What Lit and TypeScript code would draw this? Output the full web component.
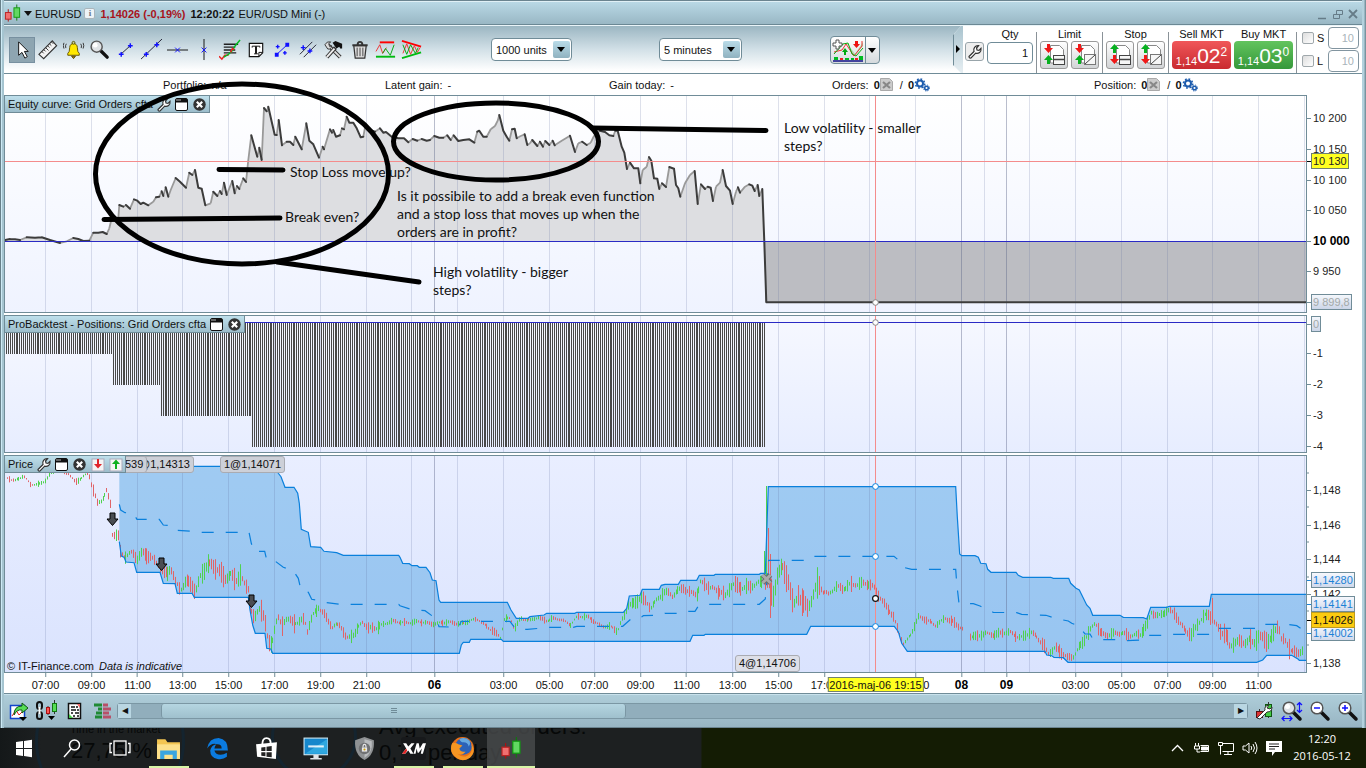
import { LitElement, html, svg, css } from "lit";
import { customElement, property } from "lit/decorators.js";
import { classMap } from "lit/directives/class-map.js";

type Pt = [number, number];

const LEFT = 5;
const SPAN = 1301;
const pct = (x: number) => `${((x - LEFT) / SPAN) * 100}%`;

/* Traces are digitised in thirds of a pixel, relative to a local origin. */
const trace = (x0: number, y0: number, s: string): Pt[] =>
  s.trim().split(/\s+/).map((p) => {
    const [x, y] = p.split(",").map(Number);
    return [x0 + x / 3, y0 + y / 3] as Pt;
  });
const path = (pts: Pt[]) => "M" + pts.map(([x, y]) => `${x.toFixed(1)} ${y.toFixed(1)}`).join("L");

const equity: Pt[] = [
  ...trace(0, 90, `15,450 30,447 45,448 60,450 80,442 105,443 125,442 150,450 170,456 180,459 200,454 220,444 235,447 250,453 268,452 280,428 295,428 308,426 320,432 328,415 335,385 345,390 355,385 358,345 370,350 378,345 390,356 402,328 412,332 422,342 430,338 445,346 460,335 468,322 478,320 485,304 490,318 497,292 505,320 512,300 527,264 540,275 558,293 568,248 577,255 585,240 595,293 605,296 616,346 632,340 640,305 652,318 660,303 665,312 672,278 680,315 690,290 697,273 704,310 711,288 718,297 730,265 738,276 745,210 754,136 762,165 772,200 778,173 785,210 792,54 800,64 805,50 815,95 824,134 830,135 836,90 846,166 860,155 870,155 880,165 886,140 905,178 919,100 928,152 940,163 957,203 968,170 972,178 990,118 996,128 1000,120 1008,140 1020,136 1026,115 1032,118 1040,80 1048,98 1060,98 1070,115 1082,142 1090,140 1096,108 1110,120 1125,125`),
  ...trace(380, 90, `0,115 10,128 18,126 35,140 55,145 72,145 85,157 98,147 112,152 125,147 140,152 150,150 163,138 178,143 190,143 202,136 212,150 221,136 235,153 250,150 268,148 283,158 292,125 298,122 310,140 320,140 332,118 345,108 353,92 358,75 370,122 380,140 388,152 396,118 404,116 410,145 422,138 434,133 442,165 450,160 457,150 472,168 480,155 489,170 496,153 508,165 518,152 524,166 545,152 570,137 585,186 595,160 607,155 620,165 632,158 642,138 660,122 675,126 688,136 700,138 706,122 713,122 725,170 733,188 741,237 750,218 762,235 775,235 781,280 788,240 800,230 807,201 814,212 822,265 832,266 838,297 846,280 858,291 868,231 882,236 888,285 895,295 901,320 915,280 930,255 944,243 953,342 963,283 975,297 983,290 992,293 999,333 1008,290 1020,278 1028,240 1038,288 1050,302 1058,342 1068,305 1074,292 1080,308 1095,290 1108,283 1117,287 1124,303 1133,285 1138,318 1147,297 1153,455 1159,637`),
  [1306, 302.3],
];

const upper: Pt[] = [
  ...trace(0, 450, `358,49 825,49 835,70 843,80 855,112 882,112 893,130 898,160 904,238 925,247 932,290 962,292 972,304 1010,308 1030,316 1196,316`),
  ...trace(400, 450, `0,322 8,340 28,341 36,347 52,347 58,352 78,352 90,368 97,390 108,392 117,450 122,457 322,457 333,480 349,505 384,505 390,500 432,495 440,490 524,490 530,487 670,487 680,475 688,438 720,436 727,418 778,418 784,406 795,403 835,403 842,391 890,391 898,376 942,376 946,373 1078,373 1082,370 1096,370 1105,110`),
  ...trace(740, 450, `647,110 652,200 659,312 665,317 705,317 715,322 722,340 738,341 743,358 753,367 828,367 835,376 848,382`),
  ...trace(1040, 450, `0,382 32,382 40,385 86,385 92,400 108,415 118,420 140,465 150,475 158,496 240,496 250,502 310,503 320,507 332,472 380,472 388,469 508,469 514,433 799,433`),
];
const lower: Pt[] = [
  ...trace(0, 450, `358,275 364,318 372,322 378,336 402,338 410,367 480,367 490,400 525,401 532,430 576,430 583,442 745,442 750,480 758,525 766,550 795,550 800,595 812,597 818,610`),
  ...trace(400, 450, `178,610 184,585 190,577 208,577 212,568 304,568 310,574 870,574 878,556 912,556 916,553 1220,553 1232,529`),
  ...trace(740, 450, `463,529 475,545 485,580 502,604 915,604 920,615 935,617 942,622`),
  ...trace(1040, 450, `40,622 70,623 84,637 650,637 668,630 680,616 755,616 775,628 778,631 799,631`),
];
const middle: Pt[] = [
  ...trace(0, 450, `358,163 362,180 375,188 400,190 411,208 478,208 490,225 520,228 532,241 590,245 602,247 747,247 754,280 762,304 794,304 800,330 825,333 850,352 880,362 895,385 903,420 925,427 935,448 965,452 980,458 1020,463 1196,463`),
  ...trace(400, 450, `0,467 30,477 75,482 100,500 110,505 117,530 175,532 184,514 330,514 345,535 355,538 382,538 420,535 450,532 520,532 530,529 668,529 680,518 695,505 720,505 730,497 780,496 795,490 830,490 845,484 885,484 895,468 925,463 1078,463 1096,447 1106,331 1218,331 1234,319`),
  ...trace(740, 450, `462,319 475,330 490,352 515,358 647,358 650,400 657,460 700,461 720,468 740,480 760,487 830,488 845,493`),
  ...trace(1040, 450, `18,496 50,506 85,513 95,520 115,527 135,552 150,552 158,566 170,569 240,569 250,572 310,570 325,556 380,556 400,553 508,553 530,535 660,535 672,523 740,523 770,527 782,535 799,535`),
];

const price: Pt[] = `7,478 15,480 23,476 30,485 38,484 45,480 52,472 60,468 68,473 75,482 82,478 88,473 92,487 97,502 102,498 106,492 110,505 112,535 118,537 120,552 125,555 132,552 137,560 142,554 150,556 157,562 162,572 167,575 170,568 175,582 180,588 186,580 192,587 195,594 200,578 207,562 212,564 218,570 224,582 230,574 235,580 240,572 245,588 248,590 251,612 254,622 260,605 264,615 268,643 271,643 275,625 279,620 281,630 285,618 290,620 298,622 304,620 307,632 312,617 318,606 324,614 332,628 340,625 346,638 355,632 362,623 368,629 380,625 392,622 405,622 430,623 447,623 460,623 470,621 478,620 485,625 492,630 500,638 504,620 510,618 514,628 520,618 530,621 538,617 545,620 552,619 560,620 570,624 577,616 588,618 600,625 610,627 617,632 625,612 628,602 634,604 640,598 645,603 650,607 657,598 663,592 672,597 678,590 683,586 690,593 697,595 700,584 706,585 712,587 720,592 725,598 732,584 740,586 750,588 760,583 764,577 770,585 772,600 777,575 782,572 788,580 793,606 798,590 803,605 807,610 812,600 818,582 823,590 828,594 835,588 842,590 848,584 855,583 862,585 868,585 875,588 880,597 888,610 893,618 898,632 903,643 908,638 913,628 918,618 928,621 935,624 945,619 955,624 961,627 970,636 976,638 985,633 995,634 1010,633 1020,637 1030,633 1037,638 1043,645 1048,652 1055,648 1062,655 1067,658 1073,655 1080,645 1088,635 1095,622 1100,632 1110,635 1120,634 1130,634 1140,635 1147,625 1151,612 1158,615 1166,611 1174,614 1180,624 1186,630 1191,635 1197,625 1204,617 1209,613 1213,620 1220,630 1225,635 1229,648 1235,642 1242,640 1249,640 1253,645 1258,638 1265,640 1272,635 1278,624 1281,640 1288,648 1297,653 1303,648`
  .split(" ").map((p) => p.split(",").map(Number) as Pt);

const priceAt = (x: number) => {
  for (let i = 1; i < price.length; i++) {
    if (x <= price[i][0]) {
      const [ax, ay] = price[i - 1];
      const [bx, by] = price[i];
      return ay + ((x - ax) / (bx - ax)) * (by - ay);
    }
  }
  return price[price.length - 1][1];
};
const halfRange = (x: number) =>
  x < 90 ? 2.5 : x < 200 ? 6 : x < 295 ? 8 : x < 380 ? 5 : x < 620 ? 3 : x < 765 ? 6 : x < 820 ? 12 : x < 880 ? 6 : x < 1035 ? 4 : x < 1210 ? 5 : x < 1290 ? 8 : 5;

const candlePaths = () => {
  let up = "M766.5 486V580M764.5 551V575";
  let down = "M768.5 528V575M770.5 554V618M1212.5 598V622";
  const center = (i: number, x: number) =>
    priceAt(x) + (Math.sin(i * 1.05) + Math.sin(i * 0.43)) * halfRange(x) * 0.25;
  for (let i = 0; i < 679; i++) {
    const x = Math.round(7 + i * 1.91);
    if ((x > 962 && x < 970) || x > 1304) continue;
    const noise = Math.abs(Math.sin(i * 12.9898) * 43758.5453) % 1;
    const h = halfRange(x) * (0.3 + noise * noise * 1.1);
    const c = center(i, x);
    const slope = center(i + 1, x + 2) - center(i - 1, x - 2);
    const seg = `M${x + 0.5} ${(c - h).toFixed(1)}V${(c + h).toFixed(1)}`;
    if (slope > 0) down += seg;
    else up += seg;
  }
  return { up, down };
};
const candles = candlePaths();

const barPath = () => {
  let d = "";
  for (let i = 0; ; i++) {
    const x = Math.round(6 + i * 1.91);
    if (x > 765) break;
    const y = x < 112 ? 354 : x < 161 ? 385 : x < 251 ? 416 : 447;
    d += `M${x + 0.5} 323V${y}`;
  }
  return d;
};
const bars = barPath();

const minorGrid = [45, 91, 137, 182, 228, 274, 320, 366, 411, 457, 503, 549, 594, 640, 686, 732, 778, 824, 869, 915, 984, 1029, 1075, 1121, 1167, 1212, 1258, 1304];
const dayGrid = [434, 961, 1006];
const grid = svg`
  <path d=${minorGrid.map((x) => `M${x + 0.5} 90V680`).join("")} stroke="#5a6a9a" stroke-opacity=".2"/>
  <path d=${dayGrid.map((x) => `M${x + 0.5} 90V680`).join("")} stroke="#5a6488" stroke-opacity=".42"/>`;
const crosshair = svg`<path d="M875.5 90V680" stroke="#f48c8c"/>`;

const times: [number, string, boolean?][] = [
  [45, "07:00"], [91, "09:00"], [137, "11:00"], [182, "13:00"], [228, "15:00"], [274, "17:00"], [320, "19:00"], [366, "21:00"],
  [434, "06", true], [503, "03:00"], [549, "05:00"], [594, "07:00"], [640, "09:00"], [686, "11:00"], [732, "13:00"], [778, "15:00"],
  [824, "17:00"], [915, "21:00"], [961, "08", true], [1006, "09", true], [1075, "03:00"], [1121, "05:00"], [1167, "07:00"], [1212, "09:00"], [1258, "11:00"],
];

const wrench = svg`<path d="M3 13.5 8 8.500C7 5.500 9 2.500 12.500 2.700L10.500 5 11 7 13 7.300 15 5.300C15.500 9 12.500 11 9.700 10.200L5 15Q3 15.500 3 13.500Z" fill="#fff" stroke="#333" stroke-width="1.200"/>`;
const headIcons: Record<string, unknown> = {
  wrench,
  window: svg`<rect x="2.500" y="2.500" width="12" height="12" rx="1.500" fill="#fff" stroke="#111"/><path d="M3 3h11v3.500H3z" fill="#111"/><path d="M3 3h5v2H3z" fill="#666"/>`,
  close: svg`<circle cx="8.500" cy="8.500" r="6.200" fill="#333"/><path d="m5.800 5.800 5.400 5.400m0-5.400-5.400 5.400" stroke="#fff" stroke-width="2.200"/>`,
  down: svg`<rect x="3" y="3" width="12" height="12" fill="#f4f4f4" stroke="#aab"/><path d="M8 3h2v5h3l-4 4.500L5 8h3z" fill="#e0252b"/>`,
  up: svg`<rect x="3" y="3" width="12" height="12" fill="#f4f4f4" stroke="#aab"/><path d="M8 13h2V8h3L9 3.500 5 8h3z" fill="#10b020"/>`,
};
const candlePair = svg`<path d="M4.500 5v13" stroke="#a11"/><rect x="1.500" y="8.500" width="6" height="7" fill="#f07070" stroke="#b22"/><path d="M13.500 0v17" stroke="#171"/><rect x="10.500" y="3.500" width="6" height="10" fill="#62d862" stroke="#191"/>`;

const glass = svg`<path d="m12 12 7 7" stroke="#111" stroke-width="3.500" stroke-linecap="round"/><circle cx="8" cy="8" r="5.800" fill="#dfe3e6" stroke="#555" stroke-width="1.500"/><circle cx="6.500" cy="6.500" r="2.500" fill="#fff"/>`;
const tools: [string, unknown][] = [
  ["Pointer", svg`<path d="M8 3v14l3.500-3 3 6 2.500-1.500-3-5.500H18z" fill="#fff" stroke="#111"/>`],
  ["Ruler", svg`<path d="m2 16 14-14 4.500 5L7 20.500z" fill="#f4f4f4" stroke="#333" stroke-width="1.200"/><path d="m5 13 2 2m0-4 2 2m0-4 3 3m-1-5 2 2m0-4 2 2m0-4 2 2" stroke="#333"/>`],
  ["Alert", svg`<path d="M5 15q2-1 2-6c0-3 2-4 4-4.500 2 .5 4 1.500 4 4.500q0 5 2 6v2H5z" fill="#ffe800" stroke="#665500"/><circle cx="11" cy="4" r="1.500" fill="#cc9" stroke="#550"/><path d="M9 18h4l-2 2.500z" fill="#b80" stroke="#540"/><path d="M3.500 5Q2 7 3 9.500M1 4q-1.500 3 0 6M18.500 5Q20 7 19 9.500M21 4q1.500 3 0 6" fill="none" stroke="#333"/>`],
  ["Zoom", glass],
  ["Segment", svg`<path d="m6 16 10-9" stroke="#223"/><path d="M4 16h5m-2.500-2.500v5M13.500 7h5M16 4.500v5" stroke="#11f" stroke-width="1.500"/>`],
  ["Line", svg`<path d="M0 21 22 0" stroke="#223"/><path d="M3 16h5m-2.500-2.500v5M14 6h5m-2.500-2.500v5" stroke="#11f" stroke-width="1.500"/>`],
  ["Horizontal line", svg`<path d="M0 11.500h22" stroke="#111"/><path d="m8.500 9 5 5m0-5-5 5" stroke="#11f"/>`],
  ["Vertical line", svg`<path d="M11.500 0v22" stroke="#111"/><path d="m9 9 5 5m0-5-5 5" stroke="#11f"/>`],
  ["Fibonacci", svg`<path d="M5 5.500h15M5 8.500h12M5 11.500h12M5 14.500h13" stroke="#222" stroke-width="1.500"/><path d="m0 18 3 3 3-4 4 0" fill="none" stroke="#e22" stroke-width="1.500"/><path d="m5 19 5-3 4-4 3-5 5-6" fill="none" stroke="#0b2" stroke-width="1.500"/><path d="m12 14 2-4 2 1" fill="none" stroke="#e22" stroke-width="1.500"/>`],
  ["Text", svg`<path d="M4.500 4.500h14v10l-4 4h-10z" fill="#fff" stroke="#111" stroke-width="1.200"/><path d="M14.500 18v-4H18" fill="none" stroke="#111"/><path d="M7.500 9V7.500h8V9M9.500 15.500h4" fill="none" stroke="#111"/><path d="M11.500 7.500v8" stroke="#111" stroke-width="2"/>`],
  ["Regression", svg`<path d="m5 17 12-11" stroke="#11f"/><path d="M4 14.500h4v4H4zM15 4h4v4h-4z" fill="#11f"/><path d="M7 6v4m-2-2h4M14.500 12.500v4m-2-2h4" stroke="#11f" stroke-width="1.500"/>`],
  ["Channel", svg`<path d="M3 16 16 3M7 19 20 6" stroke="#223"/><path d="M4 9h5M6.500 6.500v5M11 12.500h5M13.500 10v5" stroke="#11f" stroke-width="1.500"/>`],
  ["Drawing settings", svg`<path d="m5 6 13 13" stroke="#333" stroke-width="4"/><path d="m5 6 13 13" stroke="#ddd" stroke-width="2"/><path d="M2 6q2-4 6-3l-2 2 1 3 2-1q0 4-4 3.500z" fill="#ddd" stroke="#333"/><path d="m4 19 9-10" stroke="#333" stroke-width="4"/><path d="m4 19 8-9" stroke="#eee" stroke-width="2"/><path d="m10 4 3-2 7 3v5h-2l-1-2-3 2z" fill="#111"/>`],
  ["Delete", svg`<path d="M5 7h13l-1.500 13h-10z" fill="#ddd" stroke="#333" stroke-width="1.300"/><path d="M3.500 6.500h16M9 6q0-3 2.500-3T14 6" fill="none" stroke="#333" stroke-width="2"/><path d="M8.500 9v9m3-9v9m3-9v9" stroke="#444"/>`],
  ["Range pattern", svg`<path d="M5 3.500h15" stroke="#f00" stroke-width="2"/><path d="M1 18.500h20" stroke="#0b1" stroke-width="2"/><path d="m1 13 4-7 3 9 4-6" fill="none" stroke="#e33"/><path d="m8 15 3-5 5 7 4-11" fill="none" stroke="#0a1"/>`],
  ["Triangle pattern", svg`<path d="m1 2 20 6" stroke="#f00" stroke-width="2"/><path d="m1 20 20-6" stroke="#0b1" stroke-width="2"/><path d="m2 15 4-10 4 11 4-9 3 7 3-5" fill="none" stroke="#e33"/><path d="m2 6 4 10 4-10 5 9 3-6" fill="none" stroke="#0a1"/>`],
];

const orderIcon = (kind: string, first: string) => {
  const a = first === "sell" ? ["#f01818", "M8 1h-3v4H2l4.500 5L11 5H8z"] : ["#08b020", "M5 10h3V6h3L6.500 1 2 6h3z"];
  const b = first === "sell" ? ["#08b020", "M5 21h3v-4h3l-4.500-5L2 17h3z"] : ["#f01818", "M8 12h-3v4H2l4.500 5L11 16H8z"];
  return svg`<path d="M8.500 2.500h9l4 4V20h-13z" fill="#fff" stroke="#888"/>
    ${kind === "line"
      ? svg`<rect x="11.500" y="12.500" width="11" height="9" fill="#f6f6f6" stroke="#444"/><path d="M11 16.500h12" stroke="#444" stroke-width="1.500"/>`
      : svg`<rect x="11.500" y="11.500" width="11" height="10" fill="#f6f6f6" stroke="#777"/><path d="m12 21 10-9" stroke="#444"/>`}
    <path d=${a[1]} fill=${a[0]}/><path d=${b[1]} fill=${b[0]}/>`;
};

@customElement("chart-header")
export class ChartHeader extends LitElement {
  @property() label = "";
  @property({ type: Array }) icons: string[] = [];
  static styles = css`
    :host { display: flex; align-items: center; height: 17px; padding: 0 0 0 3px; color: #111; font-size: 11px; background: linear-gradient(#bfe0ec, #9cbdcb); border-right: 1px solid #708c98; border-bottom: 1px solid #708c98; }
    .name { margin-right: 2px; white-space: nowrap; }
    .btn { width: 18px; height: 17px; padding: 0; border: 0; background: none; }
    .btn svg { display: block; width: 17px; height: 17px; }
  `;
  render() {
    return html`<span class="name">${this.label}</span>${this.icons.map(
      (i) => html`<button class="btn" aria-label=${i}><svg viewBox="0 0 17 17" fill="none">${headIcons[i]}</svg></button>`
    )}`;
  }
}

@customElement("value-axis")
export class ValueAxis extends LitElement {
  @property({ type: Number }) top = 0;
  @property({ type: Array }) marks: [number, string, string?][] = [];
  @property({ type: Array }) minor: number[] = [];
  static styles = css`
    :host { display: block; position: relative; }
    .mark, .minor { position: absolute; left: 0; transform: translateY(-50%); display: flex; align-items: center; white-space: nowrap; }
    .mark::before, .minor::before { content: ""; width: 4px; height: 1px; background: #708c98; }
    .minor::before { width: 2px; }
    .text { height: 14px; padding: 0 1px; border: 1px solid transparent; font: 11px/14px "Liberation Sans", Arial, sans-serif; color: #222; }
    .bold .text { font-size: 12px; font-weight: bold; color: #000; }
    .yellow .text { background: #ffff20; border-color: #708070; color: #222; }
    .gold .text { background: #fccb10; border-color: #bc9a20; color: #111; }
    .muted .text { background: linear-gradient(#f4f7fc, #ccd5e8); border-color: #708c98; color: #a3a9a8; }
    .blue .text { background: linear-gradient(#f6f8fd, #d0d9ec); border-color: #708c98; color: #1c82d6; }
    .yellow::before, .gold::before { background: #000; }
    .blue::before { background: #1c82d6; }
  `;
  render() {
    return html`${this.minor.map((y) => html`<span class="minor" style="top:${y - this.top}px"></span>`)}
      ${this.marks.map(([y, t, k]) => html`<span class="mark ${k ?? ""}" style="top:${y - this.top}px"><span class="text">${t}</span></span>`)}`;
  }
}

@customElement("app-root")
export class AppRoot extends LitElement {
  static styles = css`
    :host { display: block; min-height: 100vh; background: #141b06; font: 11px/14px "Liberation Sans", Arial, sans-serif; color: #111; overflow: hidden; }
    * { box-sizing: border-box; }
    button, input, select { font: inherit; color: inherit; margin: 0; }
    svg { display: block; }
    .window { padding: 0 4px; background: linear-gradient(90deg, #68808a 0 1px, #cdeaf5 1px 2px, #a5c4d0 2px 4px, #a5c4d0 calc(100% - 4px), #c2dfeb calc(100% - 3px), #8aa8b4 calc(100% - 1px), #68808a 100%); }
    .title { display: flex; align-items: center; height: 25px; padding: 2px 3px 0 0; border-top: 1px solid #6b8490; border-bottom: 1px solid #6b8894; background: linear-gradient(#e0f0f6 0 1px, #b9d8e5 1px, #99b7c4); }
    .title .logo { width: 18px; height: 19px; }
    .title .caret { margin: 0 3px 0 2px; border: 4px solid transparent; border-top: 5px solid #111; border-bottom: 0; width: 7px; }
    .title .info { width: 11px; height: 11px; margin: 0 5px 0 3px; border: 1px solid #aab6bc; border-radius: 2px; background: #eef4f7; font: bold 9px/9px "Liberation Serif", serif; text-align: center; color: #678; }
    .title .loss { font-weight: bold; color: #a8141c; margin-right: 5px; }
    .title .clock { font-weight: bold; margin-right: 4px; }
    .title .win { display: flex; margin-left: auto; gap: 2px; }
    .title .win button { width: 13px; height: 14px; padding: 0; border: 0; background: none; }
    .toolbar { display: flex; align-items: center; height: 49px; border-top: 1px solid #e9f4f8; border-bottom: 1px solid #708c98; padding-left: 5px; background: linear-gradient(#9bb6c2, #d2e0e7 50%, #fff 95%); }
    .tools { display: flex; }
    .tool { width: 26px; height: 26px; padding: 2px; border: 0; background: none; }
    .tool.active { background: #8ea5b1; border: 1px solid #7890a0; padding: 1px; }
    .combo { position: relative; width: 81px; height: 23px; }
    .combo select { width: 100%; height: 100%; appearance: none; border: 1px solid #708c98; border-radius: 4px; background: #fff; padding: 0 0 0 4px; }
    .combo .drop { position: absolute; right: 2px; top: 3px; width: 17px; height: 17px; border-radius: 2px; background: linear-gradient(#b9dbe8, #90b2c0); pointer-events: none; }
    .combo .drop::after, .ind .arrow::after { content: ""; position: absolute; left: 4px; top: 6px; border: 4px solid transparent; border-top: 5px solid #000; border-bottom: 0; }
    .units { margin-left: 66px; }
    .minutes { margin-left: 87px; width: 83px; }
    .ind { display: flex; margin-left: 88px; height: 28px; border: 1px solid #708c98; border-radius: 4px; background: linear-gradient(#fff, #d5dadd); overflow: hidden; flex: none; }
    .ind button { padding: 0; border: 0; background: none; width: 34px; }
    .ind .arrow { position: relative; width: 14px; border-left: 1px solid #708c98; }
    .ind .arrow::after { left: 2px; top: 11px; }
    .trade { display: flex; align-items: stretch; margin-left: auto; height: 47px; padding: 0 3px 0 12px; gap: 3px; position: relative; background: #fff; clip-path: polygon(0 9px, 8px 0, 100% 0, 100% 100%, 8px 100%, 0 39px); }
    .trade::before { content: ""; position: absolute; left: 0; top: 0; width: 9px; height: 47px; background: linear-gradient(#a9c3ce, #e7eff3); border-left: 1px solid #708c98; }
    .trade::after { content: ""; position: absolute; left: 3px; top: 19px; border: 4px solid transparent; border-left-color: #000; border-right: 0; }
    .col { display: flex; flex-direction: column; align-items: center; }
    .col .cap { height: 14px; line-height: 14px; margin-top: 1px; }
    .pair { display: flex; gap: 3px; }
    .gear { align-self: flex-start; margin-top: 16px; width: 19px; height: 19px; padding: 0; border: 1px solid #98a4aa; border-radius: 3px; background: #eee; }
    .qty { width: 46px; height: 22px; border: 1px solid #708c98; border-radius: 4px; text-align: right; padding: 0 4px; margin-top: 1px; }
    .ord { width: 28px; height: 28px; padding: 1px; border: 1px solid #9a9a9a; border-radius: 3px; background: linear-gradient(#fff, #d2d4d6); }
    .sep { width: 1px; margin-top: 6px; background: #8a9298; }
    .mkt { width: 59px; height: 28px; border: 0; border-radius: 4px; padding: 0; color: #fff; display: flex; align-items: flex-end; justify-content: center; line-height: 16px; }
    .mkt .big { font-size: 21px; line-height: 27px; }
    .mkt .sup { font-size: 12px; line-height: 14px; align-self: flex-start; margin-top: 4px; }
    .sell { background: linear-gradient(#f0575a, #c92a30); }
    .buy { background: linear-gradient(#62c45e, #36983a); }
    .sl { display: grid; grid-template-columns: 12px 8px 31px; column-gap: 3px; align-items: center; padding-left: 2px; }
    .sl input[type="checkbox"] { appearance: none; width: 12px; height: 12px; border: 1px solid #a0a8ac; border-radius: 2px; background: linear-gradient(135deg, #ddd, #fff); }
    .sl .num { width: 31px; height: 22px; border: 1px solid #8295a0; border-radius: 4px; text-align: right; padding: 0 4px; color: #a8b4ba; background: #fff; }
    .stage { position: relative; background: #fff; }
    .facts { display: grid; grid-template-columns: 222fr 224fr 223fr 262fr 268fr; height: 21px; padding-left: 159px; align-items: center; line-height: 20px; white-space: nowrap; }
    .fact { display: flex; align-items: center; }
    .fact b, .fact .v { margin-left: 5px; }
    .fact .slash { margin-left: 7px; }
    .charts { display: grid; grid-template-columns: minmax(0, 1fr) 55px; row-gap: 2px; }
    .panel { position: relative; border: 1px solid #708c98; overflow: hidden; }
    .panel > svg { width: 100%; height: 100%; }
    .panel.eq { height: 218px; background: linear-gradient(#fff, #eff3ff); }
    .panel.bt { height: 138px; background: linear-gradient(#f6f8ff, #e7edff); }
    .panel.pr { height: 218px; background: linear-gradient(#e9eeff, #dae3fe); }
    .panel > chart-header { position: absolute; left: 0; top: 0; z-index: 2; }
    .tag { position: absolute; z-index: 1; height: 17px; padding: 0 3px; border: 1px solid #a9abb2; border-radius: 3px; background: #cdd0d8; line-height: 15px; font-size: 11px; white-space: nowrap; }
    .tag.exit { background: #dddfe8; }
    .credit { position: absolute; left: 2px; bottom: -1px; font-size: 11px; white-space: nowrap; }
    .credit em { margin-left: 2px; }
    .times { position: relative; height: 20px; margin: 0 56px 0 1px; }
    .time { position: absolute; top: 0; transform: translateX(-50%); display: flex; flex-direction: column; align-items: center; line-height: 17px; }
    .time::before { content: ""; width: 1px; height: 4px; background: #708c98; }
    .time.bold { font-weight: bold; font-size: 12px; color: #000; }
    .cursor { position: absolute; top: 4px; transform: translateX(-50%); padding: 0 1px; height: 15px; line-height: 14px; border: 1px solid #708070; background: #ffff20; white-space: nowrap; }
    .notes { position: absolute; inset: 0 56px 0 1px; z-index: 4; pointer-events: none; }
    .notes svg { width: 100%; height: 100%; }
    .note { position: absolute; margin: 0; font: 14px/18px Lato, "Open Sans", sans-serif; color: #111; white-space: pre; }
    .foot { display: flex; align-items: center; height: 35px; padding: 0 0 0 1px; border-top: 1px solid #708c98; border-bottom: 1px solid #6b8490; background: linear-gradient(#c9e2ec 0 1px, #aecdd9 1px, #98b5c3); }
    .foot .tool { width: 28px; height: 24px; padding: 1px 3px; }
    .scroll { display: flex; flex: 1; height: 16px; margin: 0 2px 0 0; border: 1px solid #7b97a4; border-radius: 3px; background: #91aebc; }
    .scroll button { width: 13px; padding: 0; border: 0; background: #b9d6e2; font-size: 8px; line-height: 13px; flex: none; }
    .scroll .track { flex: 1; display: flex; padding-left: 2.7%; }
    .scroll .thumb { width: 43.3%; border: 1px solid #7b97a4; border-width: 0 1px; border-radius: 3px; background: linear-gradient(#b5d5e1, #9fc0cd); display: grid; place-items: center; }
    .scroll .grip { width: 6px; height: 5px; border: 1px solid #708c98; border-width: 1px 0; background: linear-gradient(transparent 1px, #708c98 1px 2px, transparent 2px); }
    .taskbar { position: relative; display: flex; height: 40px; padding-right: 5px; background: linear-gradient(90deg, #141819 0, #1d2021 3%, #1d2021 51.300%, #141c04 51.400%); overflow: hidden; }
    .ghost { position: absolute; color: #060808; white-space: nowrap; font-size: 22px; line-height: 22px; }
    .ghost.small { font-size: 11px; line-height: 12px; }
    .ring { position: absolute; border-radius: 50%; border: 3px solid #14242f; }
    .app { position: relative; width: 49px; height: 40px; padding: 8px 12px; border: 0; background: none; flex: none; }
    .app.sys { width: 48px; }
    .app.open::after { content: ""; position: absolute; left: 5px; right: 4px; bottom: 0; height: 2px; background: #d8f5a6; }
    .app.current { background: #4a4c4ecc; width: 48px; }
    .app.current::after { left: 0; right: 0; }
    .tray { display: flex; align-items: center; margin-left: auto; gap: 8px; position: relative; }
    .tray button { width: 16px; height: 16px; border: 0; padding: 0; background: none; }
    .tray .when { width: 68px; text-align: center; color: #fff; font: 11px/17px "Open Sans", "Noto Sans", sans-serif; margin: -3px 5px 0 -2px; }
  `;

  private gears() {
    return html`<svg width="17" height="14" viewBox="0 0 17 14" fill="none"><circle cx="6" cy="5.500" r="3" stroke="#1c5cae" stroke-width="2"/><circle cx="6" cy="5.500" r="4.600" stroke="#1c5cae" stroke-width="1.500" stroke-dasharray="1.800 1.800"/><circle cx="12.500" cy="10" r="1.800" fill="#fff" stroke="#1c5cae" stroke-width="1.500"/><circle cx="12.500" cy="10" r="3" stroke="#1c5cae" stroke-dasharray="1.200 1.200"/></svg>`;
  }
  private cancel() {
    return html`<svg width="13" height="13" viewBox="0 0 13 13" fill="none"><path d="M.5.500h9l3 3v9H.5z" fill="#ccc" stroke="#aaa"/><path d="m3 4 7 6m0-6-7 6" stroke="#888" stroke-width="2.200"/></svg>`;
  }

  private equityPanel() {
    let rise = "";
    let fall = "";
    for (let i = 1; i < equity.length; i++) {
      const [a, b] = [equity[i - 1], equity[i]];
      const seg = path([a, b]);
      if (b[1] < a[1] - 1.5) rise += seg;
      else fall += seg;
    }
    const body = equity.filter(([x]) => x < 765);
    return html`<section class="panel eq">
      <svg viewBox="5 96 1301 216" preserveAspectRatio="none" fill="none">
        <path d="${path(body)}L765 241L5 241Z" fill="#dddee1"/>
        <rect x="765" y="241" width="541" height="61" fill="#bcbdc2"/>
        ${grid}
        <path d=${rise} stroke="#999" stroke-width="1.800"/><path d=${fall} stroke="#3c3c3c" stroke-width="2" stroke-linecap="round"/>
        <path d="M5 241.500H1306" stroke="#2a2ac4"/><path d="M5 161.500H1306" stroke="#f48c8c"/>
        ${crosshair}
        <circle cx="875.5" cy="302.5" r="2.800" fill="#fff" stroke="#888"/>
      </svg>
      <chart-header label="Equity curve: Grid Orders cfta" .icons=${["wrench", "window", "close"]}></chart-header>
    </section>
    <value-axis .top=${95} .marks=${[[118, "10 200"], [149, "10 150"], [180, "10 100"], [161, "10 130", "yellow"], [210, "10 050"], [241, "10 000", "bold"], [271, "9 950"], [302, "9 899,8", "muted"]]}></value-axis>`;
  }

  private backtestPanel() {
    return html`<section class="panel bt">
      <svg viewBox="5 316 1301 136" preserveAspectRatio="none" fill="none">
        ${grid}<path d=${bars} stroke="#484848" shape-rendering="crispEdges"/>
        <path d="M5 322.500H1306" stroke="#2a2ac4"/>${crosshair}
        <circle cx="875.5" cy="322.5" r="2.800" fill="#fff" stroke="#888"/>
      </svg>
      <chart-header label="ProBacktest - Positions: Grid Orders cfta" .icons=${["window", "close"]}></chart-header>
    </section>
    <value-axis .top=${315} .marks=${[[324, "0", "muted"], [353, "-1"], [384, "-2"], [415, "-3"], [446, "-4"]]}></value-axis>`;
  }

  private pricePanel() {
    const arrow = (x: number, y: number) => svg`<path d="M${x - 2.5} ${y - 6}h5v6h3l-5.500 6.500-5.500-6.500h3z" fill="#4a4d52" stroke="#000"/>`;
    return html`<section class="panel pr">
      <svg viewBox="5 456 1301 216" preserveAspectRatio="none" fill="none">
        <path d="${path(upper)}L${path([...lower].reverse()).slice(1)}Z" fill="#4ba1e2" fill-opacity=".46"/>
        ${grid}
        <path d=${candles.up} stroke="#4fd24f"/><path d=${candles.down} stroke="#e06468"/>
        <path d=${path(upper)} stroke="#0a80dc" stroke-width="1.200"/><path d=${path(lower)} stroke="#0a80dc" stroke-width="1.200"/>
        <path d=${path(middle)} stroke="#0a80dc" stroke-width="1.200" stroke-dasharray="12 12"/>
        ${arrow(112.5, 519)}${arrow(161.5, 564)}${arrow(251.5, 601)}
        <path d="m762.500 575 8 8m0-8-8 8" stroke="#6c6c6c" stroke-width="5"/><path d="m762.500 575 8 8m0-8-8 8" stroke="#aaa" stroke-width="3"/>
        ${crosshair}
        ${[486.5, 556.5, 626.5].map((y) => svg`<circle cx="875.5" cy=${y} r="2.900" fill="#fff" stroke="#0a80dc"/>`)}
        <circle cx="875.5" cy="598.5" r="2.900" fill="#fff" stroke="#111" stroke-width="1.200"/>
      </svg>
      <span class="tag" style="left:${pct(135)};top:0">@1,14313</span>
      <span class="tag" style="left:${pct(121)};top:0">539</span>
      <span class="tag" style="left:${pct(220)};top:0">1@1,14071</span>
      <span class="tag exit" style="left:${pct(735)};top:199px">4@1,14706</span>
      <span class="credit">© IT-Finance.com <em>Data is indicative</em></span>
      <chart-header label="Price" .icons=${["wrench", "window", "close", "down", "up"]}></chart-header>
    </section>
    <value-axis .top=${455} .minor=${[473, 507, 542, 577, 611, 645]} .marks=${[[490, "1,148"], [525, "1,146"], [559, "1,144"], [594, "1,142"], [580, "1,14280", "blue"], [604, "1,14141", "blue"], [633, "1,14002", "blue"], [620, "1,14026", "gold"], [663, "1,138"]]}></value-axis>`;
  }

  private notes() {
    const items: [number, number, string][] = [
      [784, 119, "Low volatility - smaller\nsteps?"],
      [290, 163, "Stop Loss move up?"],
      [285, 208, "Break even?"],
      [397, 187, "Is it possibile to add a break even function\nand a stop loss that moves up when the\norders are in profit?"],
      [433, 263, "High volatility - bigger\nsteps?"],
    ];
    return html`<div class="notes">
      ${items.map(([x, y, t]) => html`<p class="note" style="left:${pct(x)};top:${y - 74}px">${t}</p>`)}
      <svg viewBox="5 74 1301 619" preserveAspectRatio="none" fill="none" stroke="#000" stroke-width="5" stroke-linecap="round">
        <ellipse cx="242" cy="174" rx="146.500" ry="90"/><ellipse cx="496" cy="141.500" rx="102.500" ry="38.500"/>
        <path d="M592 128 766 130.500M219 169.500 283 170M104 219.500 280 218M277 262 419 282"/>
      </svg>
    </div>`;
  }

  render() {
    return html`
      <main class="window">
        <header class="title">
          <svg class="logo" viewBox="0 0 19 19" fill="none">${candlePair}</svg>
          <span class="caret"></span><span>EURUSD</span><span class="info">i</span>
          <span class="loss">1,14026 (-0,19%)</span><span class="clock">12:20:22</span><span>EUR/USD Mini (-)</span>
          <div class="win">
            <button aria-label="Minimize"><svg viewBox="0 0 13 14" fill="none"><path d="M2 11.500h8" stroke="#667c88" stroke-width="1.500"/></svg></button>
            <button aria-label="Restore"><svg viewBox="0 0 13 14" fill="none"><path d="M5.500 3.500h6v4h-6zM2.500 7.500h6v4h-6z" stroke="#667c88"/></svg></button>
            <button aria-label="Close"><svg viewBox="0 0 13 14" fill="none"><path d="m3 3 8 8m0-8-8 8" stroke="#667c88" stroke-width="1.800"/></svg></button>
          </div>
        </header>
        <div class="toolbar">
          <div class="tools">
            ${tools.map(([name, icon], i) => html`<button class=${classMap({ tool: true, active: i === 0 })} aria-label=${name}><svg viewBox="0 0 23 23" width="22" height="22" fill="none">${icon}</svg></button>`)}
          </div>
          <div class="combo units"><select aria-label="Units"><option>1000 units</option></select><span class="drop"></span></div>
          <div class="combo minutes"><select aria-label="Timeframe"><option>5 minutes</option></select><span class="drop"></span></div>
          <div class="ind">
            <button aria-label="Add indicator"><svg viewBox="0 0 34 26" width="34" height="26" fill="none">
              <path d="M3 16 13 6l4 2 6 11 9-10V5l-8 12-8-11-4 0Z" fill="#a8e0b0"/>
              <path d="m3 15 8-2 4-6 8 12 8-10V4" stroke="#e33"/><path d="m3 17 9-10 5-1 4 11 4 2 7-8" stroke="#1a1"/>
              <path d="M5 3h3v3h3v3H8v3H5V9H2V6h3z" fill="#fff" stroke="#555"/><path d="M13 18v-3h-2l3-4 3 4h-2v3z" fill="#0a1"/><path d="M24 4h3v3h2l-3.500 4L22 7h2z" fill="#e11"/>
              <path d="M3 20h4v3H3zM14 21h4v2h-4zM20 21h3v2h-3zM28 19h4v4h-4z" fill="#0b2"/><path d="M9 21h3v2H9zM24 21h3v2h-3z" fill="#e22"/><path d="M2 24h30" stroke="#118" stroke-width="1.500"/></svg></button>
            <button class="arrow" aria-label="More indicators"></button>
          </div>
          <div class="trade">
            <button class="gear" aria-label="Order settings"><svg viewBox="0 0 17 17" width="17" height="17" fill="none">${wrench}</svg></button>
            <div class="col"><label class="cap" for="qty">Qty</label><input id="qty" class="qty" value="1" /></div>
            <span class="sep"></span>
            <div class="col"><span class="cap">Limit</span><div class="pair">
              ${["line", "slope"].map((k) => html`<button class="ord" aria-label="Limit ${k}"><svg viewBox="0 0 24 24" fill="none">${orderIcon(k, "sell")}</svg></button>`)}</div></div>
            <span class="sep"></span>
            <div class="col"><span class="cap">Stop</span><div class="pair">
              ${["line", "slope"].map((k) => html`<button class="ord" aria-label="Stop ${k}"><svg viewBox="0 0 24 24" fill="none">${orderIcon(k, "buy")}</svg></button>`)}</div></div>
            <span class="sep"></span>
            <div class="col"><span class="cap">Sell MKT</span><button class="mkt sell"><span>1,14</span><span class="big">02</span><span class="sup">2</span></button></div>
            <div class="col"><span class="cap">Buy MKT</span><button class="mkt buy"><span>1,14</span><span class="big">03</span><span class="sup">0</span></button></div>
            <span class="sep"></span>
            <div class="sl">
              <input type="checkbox" id="s" /><label for="s">S</label><input class="num" aria-label="Stop distance" value="10" />
              <input type="checkbox" id="l" /><label for="l">L</label><input class="num" aria-label="Limit distance" value="10" />
            </div>
          </div>
        </div>
        <div class="stage">
          <div class="facts">
            <div class="fact">Portfolio: <span class="v">n/a</span></div>
            <div class="fact">Latent gain: <span class="v">-</span></div>
            <div class="fact">Gain today: <span class="v">-</span></div>
            <div class="fact">Orders: <b>0</b>${this.cancel()}<span class="slash">/</span><b>0</b>${this.gears()}</div>
            <div class="fact">Position: <b>0</b>${this.cancel()}<span class="slash">/</span><b>0</b>${this.gears()}</div>
          </div>
          <div class="charts">${this.equityPanel()}${this.backtestPanel()}${this.pricePanel()}</div>
          <div class="times">
            ${times.map(([x, t, b]) => html`<span class=${classMap({ time: true, bold: !!b })} style="left:${pct(x + 0.5)}">${t}</span>`)}
            <span class="cursor" style="left:${pct(875.5)}">2016-maj-06 19:15</span>
          </div>
          ${this.notes()}
        </div>
        <footer class="foot">
          <button class="tool" aria-label="Share"><svg width="22" height="22" viewBox="0 0 22 22" fill="none"><path d="M2.500 5.500h14v13h-14z" fill="#fff" stroke="#14c" stroke-width="1.500"/><path d="m4 16 4-6 3 5 4-4" stroke="#e22"/><path d="M6 15q0-9 8-9V3l6 5-6 5v-3q-5-1-8 5z" fill="#5d5" stroke="#151"/><path d="m11 17 4 4 4-4z" fill="#000"/></svg></button>
          <button class="tool" aria-label="Link"><svg width="22" height="22" viewBox="0 0 22 22" fill="none"><rect x="1" y="2" width="5" height="7" rx="2.500" stroke="#111" stroke-width="2"/><rect x="1" y="12" width="5" height="7" rx="2.500" stroke="#111" stroke-width="2"/><path d="M3.500 7v7" stroke="#fff" stroke-width="2"/><path d="M12 6v9M18.500 0v14" stroke="#333"/><rect x="10.500" y="7.500" width="3" height="6" fill="#f55" stroke="#a11"/><rect x="16.500" y="3.500" width="4" height="8" fill="#5d5" stroke="#171"/><path d="m12 16 3.500 4 3.500-4z" fill="#000"/></svg></button>
          <button class="tool" aria-label="Orders list"><svg width="22" height="22" viewBox="0 0 22 22" fill="none"><rect x="4.500" y="3.500" width="12" height="15" fill="#fff" stroke="#111" stroke-width="1.500"/><path d="M7 7h4m1 0h2M7 10h5m1 0h2M7 13h2m2 0h4M9 16h2m2 0h2" stroke="#111" stroke-width="1.500"/><path d="m13 4 3 0v4z" fill="#e66"/><path d="m5 14 4 4H5z" fill="#4c4"/></svg></button>
          <button class="tool" aria-label="Order book"><svg width="22" height="22" viewBox="0 0 22 22" fill="none"><path d="M2 5h8M6 9h4M4 13h6M3 17h7" stroke="#1f8a34" stroke-width="3"/><path d="M11 5h5M11 9h8M11 13h6M11 17h8" stroke="#b85068" stroke-width="3"/></svg></button>
          <div class="scroll"><button aria-label="Scroll left">◀</button><div class="track"><div class="thumb"><span class="grip"></span></div></div><button aria-label="Scroll right">▶</button></div>
          <button class="tool" aria-label="Chart settings"><svg width="22" height="22" viewBox="0 0 22 22" fill="none"><path d="M6.500 9v9M15.500 2v16" stroke="#333"/><rect x="3.500" y="11.500" width="6" height="6" fill="#d33" stroke="#511"/><rect x="12.500" y="4.500" width="6" height="12" fill="#4c4" stroke="#151"/><path d="m4 18 8-8q-1-4 4-5l-2 3 3 1 2-2q0 5-5 5l-7 7z" fill="#fff" stroke="#333"/></svg></button>
          <button class="tool" aria-label="Zoom to fit"><svg width="22" height="22" viewBox="0 0 22 22" fill="none">${glass}<path d="M18.500 3v9m-2.500-7 2.500-2.500L21 5m-5 5 2.500 2.500L21 10M1 18.500h10M3.500 16 1 18.500 3.500 21m5-5 2.500 2.500L8.500 21" stroke="#11f" stroke-width="1.200"/></svg></button>
          <button class="tool" aria-label="Zoom out"><svg width="22" height="22" viewBox="0 0 22 22" fill="none">${glass}<circle cx="8" cy="8" r="5" fill="#fff"/><path d="M5 8h6" stroke="#11f" stroke-width="1.500"/></svg></button>
          <button class="tool" aria-label="Zoom in"><svg width="22" height="22" viewBox="0 0 22 22" fill="none">${glass}<circle cx="8" cy="8" r="5" fill="#fff"/><path d="M5 8h6M8 5v6" stroke="#11f" stroke-width="1.500"/></svg></button>
        </footer>
      </main>
      <nav class="taskbar">
        <span class="ring" style="left:35px;top:-62px;width:150px;height:150px"></span>
        <span class="ring" style="left:271px;top:-34px;width:86px;height:86px"></span>
        <span class="ghost small" style="left:70px;top:-5px">Time in the market</span>
        <span class="ghost" style="left:71px;top:12px">27,75 %</span>
        <span class="ghost" style="left:379px;top:-12px">Avg executed orders:</span>
        <span class="ghost" style="left:379px;top:14px">0,77 per day</span>
        <button class="app sys" aria-label="Start"><svg viewBox="0 0 24 24" fill="#fff"><path d="m4 6 7-1v7H4zM12 5l8-1.200V12h-8zM4 13h7v7l-7-1zM12 13h8v8.200L12 20z"/></svg></button>
        <button class="app sys" aria-label="Search"><svg viewBox="0 0 24 24" fill="none" stroke="#fff" stroke-width="1.500"><circle cx="14.500" cy="9" r="5"/><path d="m11 13-7 8"/></svg></button>
        <button class="app sys" aria-label="Task view"><svg viewBox="0 0 24 24" fill="none" stroke="#fff" stroke-width="1.300"><rect x="6" y="5" width="12" height="14"/><path d="M4 7.500H2v9h2M20 7.500h2v9h-2"/></svg></button>
        <button class="app open" aria-label="Explorer"><svg viewBox="0 0 24 24"><path d="M1 3h8l2 3h12v16H1z" fill="#f3c552"/><path d="M1 8h22v14H1z" fill="#fde18c"/><path d="M4 14h16v8h-4v-4H8v4H4z" fill="#3aa5e0"/></svg></button>
        <button class="app" aria-label="Edge"><svg viewBox="0 0 24 24"><path d="M2 12Q4 2 13 2q9 1 9 12H9q1 4 6 4 3 0 6-2v4q-4 3-9 2-7-1-7-8 1-5 6-6-2 2-2 4h7q0-4-4-4Q6 6 2 12Z" fill="#0b7be0"/></svg></button>
        <button class="app" aria-label="Store"><svg viewBox="0 0 24 24"><path d="M8 8q0-6 4-6t4 5" fill="none" stroke="#fff" stroke-width="1.800"/><path d="m2 8 20-2-1 16-18-2z" fill="#fff"/><path d="m7 11 4-.5v4H7zM12 10.300l5-.6v4.800h-5zM7 15.500h4v4l-4-.5zM12 15.500h5v5l-5-.7z" fill="#222"/></svg></button>
        <button class="app" aria-label="Lenovo"><svg viewBox="0 0 24 24"><rect x="1" y="2" width="23" height="16" fill="#1687cc" stroke="#d8eef8"/><path d="m2 17 21-14v14z" fill="#2fa8e0"/><path d="M5 9h15v2H5z" fill="#fff" opacity=".85"/><path d="M10 18h5v3h3v1.500H7V21h3z" fill="#dfe5e8"/></svg></button>
        <button class="app" aria-label="Shield"><svg viewBox="0 0 24 24"><path d="m12 1 9 3q1 14-9 19Q2 18 3 4z" fill="#8f9294"/><path d="m12 3 7 2q1 11-7 16z" fill="#b9bcbe"/><circle cx="12" cy="12" r="5.500" fill="#707274"/><rect x="9.500" y="11" width="5" height="4" fill="#e8e8e8"/><path d="M10.500 11q0-3 1.500-3t1.500 3" fill="none" stroke="#eee"/><circle cx="12" cy="13" r="1" fill="#c90"/></svg></button>
        <button class="app open" aria-label="XM"><svg viewBox="0 0 24 24"><rect x="0" y="1" width="24" height="22" rx="3" fill="#17191b"/><path d="m1 17 4-5-3-5h3l2 3 3-3h3l-4 5 3 5H9l-2-3-3 3z" fill="#fff"/><path d="m12 17 3-10h2l1 5 3-5h3l-3 10h-2l1-5-3 4h-1l-1-4-1 5z" fill="#fff"/><path d="m1 17 4-5 1 2-2 3z" fill="#e02020"/></svg></button>
        <button class="app open" aria-label="Firefox"><svg viewBox="0 0 24 24"><circle cx="12" cy="12" r="11" fill="#e8701a"/><circle cx="13" cy="10" r="8" fill="#2c62b8"/><path d="M2 7q4-1 6 1l4 1-3 3q1 4 6 3-3 4-8 2 7 6 13-1 2-4 0-9 6 8-1 14-8 5-14-1Q-1 15 2 7Z" fill="#f79622"/><path d="M9 3q6-3 10 2 1 3-1 5-1-4-5-4-3 0-4-3Z" fill="#67a8df"/></svg></button>
        <button class="app open current" aria-label="Trading"><svg viewBox="-1 0 20 19">${candlePair}</svg></button>
        <div class="tray">
          <button aria-label="Show hidden icons"><svg viewBox="0 0 16 16" fill="none" stroke="#fff" stroke-width="1.300"><path d="m2 11 5.500-5.500L13 11"/></svg></button>
          <button aria-label="Battery"><svg viewBox="0 0 16 16" fill="none" stroke="#fff"><path d="M1.500 3v3m3-3v3M.5 6h5v3h-5zM3 9v3h3M6.500 5.500h8v6h-8"/><path d="M7.500 7h6v3h-6z" fill="#fff"/></svg></button>
          <button aria-label="Network"><svg viewBox="0 0 16 16" fill="none" stroke="#fff"><path d="M4.500 3.500h11v8h-11M10 12v2.500M6 14.500h8M.5 2.500h4v3h-4zM2.500 6v8.500"/></svg></button>
          <button aria-label="Volume"><svg viewBox="0 0 16 16" fill="none" stroke="#fff"><path d="M1 6h2.500L7 3v10L3.500 10H1zM9 6q1.500 2 0 4m2-6q3 4 0 8m2-10q4 6 0 12"/></svg></button>
          <button aria-label="Notifications"><svg viewBox="0 0 16 16"><path d="M0 1h16v11H9l-3 4v-4H0z" fill="#fff"/><path d="M3 4h10M3 6.500h10M3 9h6" stroke="#222"/></svg></button>
          <div class="when">12:20<br />2016-05-12</div>
        </div>
      </nav>
    `;
  }
}
